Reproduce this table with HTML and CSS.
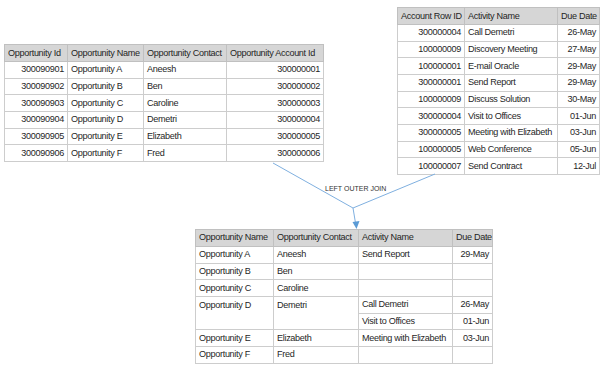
FILE: index.html
```html
<!DOCTYPE html>
<html>
<head>
<meta charset="utf-8">
<link rel="stylesheet" href="styles.css">
</head>
<body>
<div class="page">
  <div class="top-row">
    <table class="grid left-table">
      <colgroup><col style="width:63px"><col style="width:76px"><col style="width:83px"><col style="width:97px"></colgroup>
      <thead>
        <tr><th>Opportunity Id</th><th>Opportunity Name</th><th>Opportunity Contact</th><th>Opportunity Account Id</th></tr>
      </thead>
      <tbody>
        <tr><td class="num">300090901</td><td>Opportunity A</td><td>Aneesh</td><td class="num">300000001</td></tr>
        <tr><td class="num">300090902</td><td>Opportunity B</td><td>Ben</td><td class="num">300000002</td></tr>
        <tr><td class="num">300090903</td><td>Opportunity C</td><td>Caroline</td><td class="num">300000003</td></tr>
        <tr><td class="num">300090904</td><td>Opportunity D</td><td>Demetri</td><td class="num">300000004</td></tr>
        <tr><td class="num">300090905</td><td>Opportunity E</td><td>Elizabeth</td><td class="num">300000005</td></tr>
        <tr><td class="num">300090906</td><td>Opportunity F</td><td>Fred</td><td class="num">300000006</td></tr>
      </tbody>
    </table>
    <table class="grid right-table">
      <colgroup><col style="width:67px"><col style="width:93px"><col style="width:42px"></colgroup>
      <thead>
        <tr><th>Account Row ID</th><th>Activity Name</th><th class="num">Due Date</th></tr>
      </thead>
      <tbody>
        <tr><td class="num">300000004</td><td>Call Demetri</td><td class="num">26-May</td></tr>
        <tr><td class="num">100000009</td><td>Discovery Meeting</td><td class="num">27-May</td></tr>
        <tr><td class="num">100000001</td><td>E-mail Oracle</td><td class="num">29-May</td></tr>
        <tr><td class="num">300000001</td><td>Send Report</td><td class="num">29-May</td></tr>
        <tr><td class="num">100000009</td><td>Discuss Solution</td><td class="num">30-May</td></tr>
        <tr><td class="num">300000004</td><td>Visit to Offices</td><td class="num">01-Jun</td></tr>
        <tr><td class="num">300000005</td><td>Meeting with Elizabeth</td><td class="num">03-Jun</td></tr>
        <tr><td class="num">100000005</td><td>Web Conference</td><td class="num">05-Jun</td></tr>
        <tr><td class="num">100000007</td><td>Send Contract</td><td class="num">12-Jul</td></tr>
      </tbody>
    </table>
  </div>
  <table class="grid result-table">
    <colgroup><col style="width:78px"><col style="width:85px"><col style="width:94px"><col style="width:40px"></colgroup>
    <thead>
      <tr><th>Opportunity Name</th><th>Opportunity Contact</th><th>Activity Name</th><th class="num">Due Date</th></tr>
    </thead>
    <tbody>
      <tr><td>Opportunity A</td><td>Aneesh</td><td>Send Report</td><td class="num">29-May</td></tr>
      <tr><td>Opportunity B</td><td>Ben</td><td></td><td></td></tr>
      <tr><td>Opportunity C</td><td>Caroline</td><td></td><td></td></tr>
      <tr><td rowspan="2" class="top">Opportunity D</td><td rowspan="2" class="top">Demetri</td><td>Call Demetri</td><td class="num">26-May</td></tr>
      <tr><td>Visit to Offices</td><td class="num">01-Jun</td></tr>
      <tr><td>Opportunity E</td><td>Elizabeth</td><td>Meeting with Elizabeth</td><td class="num">03-Jun</td></tr>
      <tr><td>Opportunity F</td><td>Fred</td><td></td><td></td></tr>
    </tbody>
  </table>
  <div class="connectors">
    <svg width="602" height="370" viewBox="0 0 602 370">
      <line x1="273" y1="163" x2="353" y2="208" stroke="#7fb0e0" stroke-width="1"/>
      <line x1="435" y1="174" x2="353" y2="208" stroke="#7fb0e0" stroke-width="1"/>
      <line x1="353" y1="208" x2="355.5" y2="223" stroke="#7fb0e0" stroke-width="1"/>
      <polygon points="352.5,222 359.5,221 356.5,229" fill="#5b9bd5"/>
    </svg>
    <span class="join-label">LEFT OUTER JOIN</span>
  </div>
</div>
</body>
</html>
```
FILE: styles.css
```css
html, body {
  margin: 0;
  padding: 0;
  background: #ffffff;
}
.page {
  position: relative;
  width: 602px;
  height: 370px;
  font-family: "Liberation Sans", Arial, sans-serif;
  font-size: 9.1px;
  letter-spacing: -0.32px;
  color: #1f1f1f;
}
.top-row {
  display: flex;
  justify-content: space-between;
  align-items: flex-start;
  padding: 7px 2px 0 4px;
}
.left-table {
  width: 319px;
  margin-top: 37px;
}
.right-table {
  width: 202px;
}
.result-table {
  width: 297px;
  margin-top: 54px;
  margin-left: 195px;
}
.grid {
  border-collapse: collapse;
  table-layout: fixed;
  border: 1px solid #b4b4b4;
}
.grid th,
.grid td {
  border: 1px solid #cdcdcd;
  padding: 0 3px 0 3px;
  height: 15.67px;
  line-height: 11px;
  white-space: nowrap;
  overflow: hidden;
  text-align: left;
  vertical-align: middle;
  font-weight: normal;
}
.grid th {
  background: #d6d6d6;
  height: 16px;
  border-color: #c0c0c0;
}
.grid .num {
  text-align: right;
}
.grid td.top {
  vertical-align: top;
  padding-top: 3px;
}
.connectors {
  position: absolute;
  left: 0;
  top: 0;
  width: 602px;
  height: 370px;
  pointer-events: none;
}
.connectors svg {
  display: block;
}
.join-label {
  position: absolute;
  left: 325px;
  top: 185px;
  font-size: 7px;
  letter-spacing: 0;
  color: #333333;
}
```
